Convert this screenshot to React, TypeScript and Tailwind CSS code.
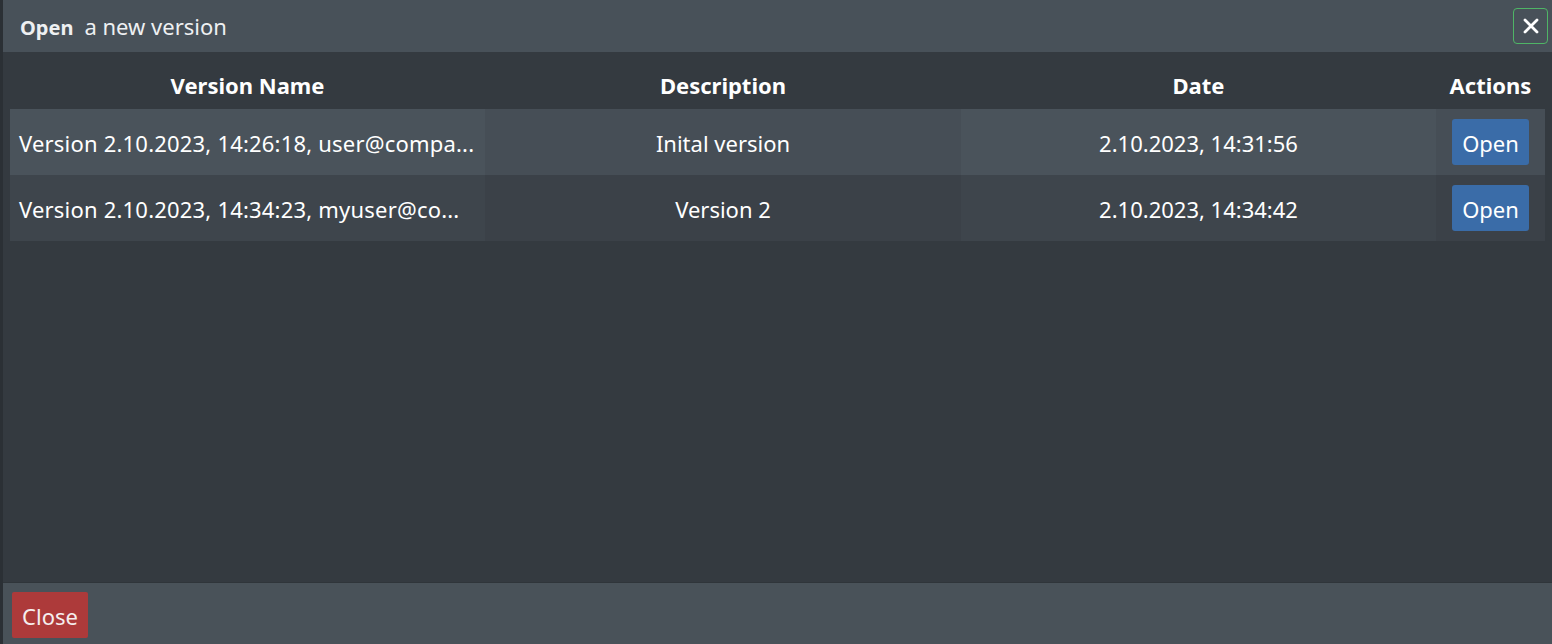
import React from "react";

const rows = [
  {
    name: "Version 2.10.2023, 14:26:18, user@compa...",
    desc: "Inital version",
    date: "2.10.2023, 14:31:56",
  },
  {
    name: "Version 2.10.2023, 14:34:23, myuser@co...",
    desc: "Version 2",
    date: "2.10.2023, 14:34:42",
  },
];

export default function App() {
  return (
    <div
      className="flex h-[644px] w-[1552px] flex-col overflow-hidden border-l-[3px] border-[#2b3035] text-white"
      style={{ fontFamily: '"Noto Sans", "Open Sans", sans-serif' }}
    >
      {/* Header */}
      <div className="flex h-[52px] shrink-0 items-center justify-between bg-[#485159] pl-[17px] pr-[4px]">
        <div className="flex items-baseline text-[#eef0f2]">
          <span className="text-[20px] font-bold">Open</span>
          <span className="ml-[11px] text-[22px]">a new version</span>
        </div>
        <button className="flex h-[36px] w-[35px] items-center justify-center rounded-[4px] border border-[#4fb566] bg-transparent">
          <svg width="18" height="18" viewBox="0 0 18 18">
            <path d="M3 3 L15 15 M15 3 L3 15" stroke="#fff" strokeWidth="2.8" strokeLinecap="round" />
          </svg>
        </button>
      </div>

      {/* Body */}
      <div className="flex-1 bg-[#343a40] pl-[7px] pr-[7px]">
        <div className="grid grid-cols-[475px_476px_475px_109px]">
          {["Version Name", "Description", "Date", "Actions"].map((h) => (
            <div
              key={h}
              className="flex h-[57px] items-center justify-center pt-[10px] text-[22px] font-bold"
            >
              {h}
            </div>
          ))}
          {rows.map((r, i) => {
            const odd = i === 0;
            const a = odd ? "bg-[#4a535b]" : "bg-[#3e454c]";
            const b = odd ? "bg-[#464e56]" : "bg-[#3b4148]";
            return (
              <React.Fragment key={i}>
                <div className={`flex h-[66px] items-center whitespace-nowrap px-[9px] pt-[3px] text-[22px] tracking-[0.2px] ${a}`}>
                  {r.name}
                </div>
                <div className={`flex h-[66px] items-center justify-center pt-[3px] text-[22px] ${b}`}>
                  {r.desc}
                </div>
                <div className={`flex h-[66px] items-center justify-center pt-[3px] text-[22px] ${a}`}>
                  {r.date}
                </div>
                <div className={`flex h-[66px] items-center justify-center ${b}`}>
                  <button className="h-[46px] w-[77px] rounded-[3px] bg-[#3a6ca8] pt-[3px] text-[22px] text-white">
                    Open
                  </button>
                </div>
              </React.Fragment>
            );
          })}
        </div>
      </div>

      {/* Footer */}
      <div className="flex h-[62px] shrink-0 items-start border-t border-[#2f353a] bg-[#495259] pl-[9px] pt-[9px]">
        <button className="h-[46px] w-[76px] rounded-[2px] bg-[#ad3a3a] pt-[3px] text-[22px] text-[#f5eeee]">
          Close
        </button>
      </div>
    </div>
  );
}
